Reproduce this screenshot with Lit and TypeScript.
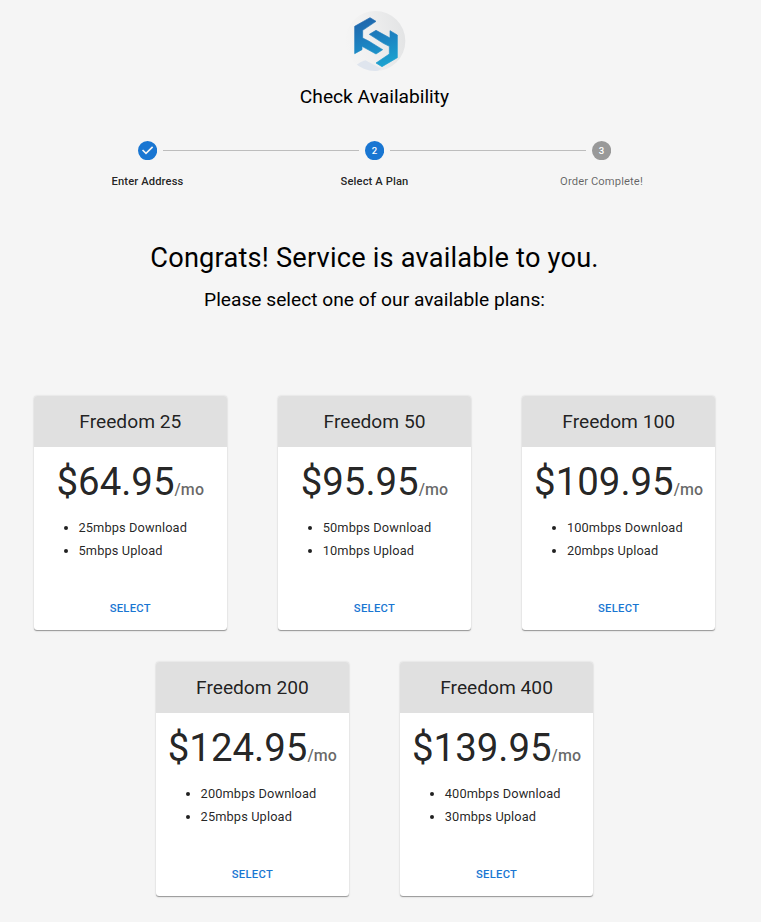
import { LitElement, html, css, svg, nothing } from "lit";
import { customElement, property } from "lit/decorators.js";

interface Plan {
  name: string;
  price: string;
  down: string;
  up: string;
}

const PLANS: Plan[] = [
  { name: "Freedom 25", price: "$64.95", down: "25mbps", up: "5mbps" },
  { name: "Freedom 50", price: "$95.95", down: "50mbps", up: "10mbps" },
  { name: "Freedom 100", price: "$109.95", down: "100mbps", up: "20mbps" },
  { name: "Freedom 200", price: "$124.95", down: "200mbps", up: "25mbps" },
  { name: "Freedom 400", price: "$139.95", down: "400mbps", up: "30mbps" },
];

@customElement("brand-logo")
export class BrandLogo extends LitElement {
  static styles = css`
    :host { display: block; width: 70px; height: 70px; }
    svg { display: block; }
  `;
  render() {
    return html`<svg width="70" height="70" viewBox="0 0 210 210">
      <defs>
        <linearGradient id="disc" x1="0" y1="0.6" x2="1" y2="0.4">
          <stop offset="0" stop-color="#f5f5f5" />
          <stop offset="0.35" stop-color="#f1f1f1" />
          <stop offset="1" stop-color="#e3e4e5" />
        </linearGradient>
        <linearGradient id="mark" gradientUnits="userSpaceOnUse" x1="80" y1="40" x2="125" y2="185">
          <stop offset="0" stop-color="#1f66ac" />
          <stop offset="0.5" stop-color="#1c84c2" />
          <stop offset="1" stop-color="#1ca3d0" />
        </linearGradient>
        <clipPath id="round"><circle cx="106" cy="108" r="90" /></clipPath>
      </defs>
      <circle cx="106" cy="108" r="90" fill="url(#disc)" />
      <path d="M44 183 Q60 170 76 166 L124 191 L106 202 L60 202Z" fill="#dfe5ee" clip-path="url(#round)" />
      <path d="M44 64 L90 38 L108 49 L68 76 L68 99 L86 108 L128 134 L108 147 L66 124 L66 134 L44 146Z" fill="url(#mark)" stroke="url(#mark)" stroke-width="2" />
      <path d="M172 158 L126 185 L108 174 L148 147 L148 124 L130 115 L88 88 L108 76 L150 99 L150 77 L172 90Z" fill="url(#mark)" stroke="url(#mark)" stroke-width="2" />
    </svg>`;
  }
}

@customElement("order-stepper")
export class OrderStepper extends LitElement {
  @property({ type: Number }) active = 1;

  static styles = css`
    :host { display: flex; width: 681px; }
    .step { flex: 1; display: flex; flex-direction: column; align-items: center; }
    .rail { width: 100%; display: grid; grid-template-columns: 1fr 19.2px 1fr; align-items: center; column-gap: 6.4px; }
    .line { height: 1px; background: #bdbdbd; }
    .icon { grid-column: 2; display: block; width: 19.2px; height: 19.2px; color: #999; }
    .icon.on { color: #1976d2; }
    .digit { font: 500 12px Roboto, sans-serif; fill: #fff; }
    .label { margin-top: 14.2px; font-size: 11.2px; line-height: 16px; letter-spacing: 0.115px; color: rgba(0, 0, 0, 0.6); }
    .label.on { font-weight: 500; letter-spacing: 0.105px; color: rgba(0, 0, 0, 0.87); }
  `;

  render() {
    const steps = ["Enter Address", "Select A Plan", "Order Complete!"];
    return steps.map((label, i) => {
      const on = i <= this.active ? "on" : "";
      return html`<div class="step">
        <div class="rail">
          ${i > 0 ? html`<span class="line"></span>` : nothing}
          <svg class="icon ${on}" viewBox="0 0 24 24">
            ${i < this.active
              ? svg`<path fill="currentColor" d="M12 0a12 12 0 1 0 0 24 12 12 0 0 0 0-24zm-2 17l-5-5 1.4-1.4 3.6 3.6 7.6-7.6L19 8l-9 9z" />`
              : svg`<circle cx="12" cy="12" r="12" fill="currentColor" /><text class="digit" x="12" y="16" text-anchor="middle">${i + 1}</text>`}
          </svg>
          ${i < steps.length - 1 ? html`<span class="line"></span>` : nothing}
        </div>
        <div class="label ${on}">${label}</div>
      </div>`;
    });
  }
}

@customElement("plan-card")
export class PlanCard extends LitElement {
  @property({ attribute: false }) plan!: Plan;

  static styles = css`
    :host {
      display: flex; flex-direction: column; box-sizing: border-box; width: 193.4px; height: 234.2px;
      overflow: hidden; border-radius: 3.2px; background: #fff; color: rgba(0, 0, 0, 0.87);
      box-shadow: 0 1.6px 0.8px -0.8px rgba(0, 0, 0, 0.2), 0 0.8px 0.8px rgba(0, 0, 0, 0.14), 0 0.8px 2.4px rgba(0, 0, 0, 0.12);
    }
    .head { padding: 12.8px; background: #e0e0e0; text-align: center; font-size: 19.2px; line-height: 25.6px; }
    .body { padding: 12.8px 12.8px 0; }
    .price { display: flex; justify-content: center; align-items: baseline; font-size: 38.4px; line-height: 44.8px; white-space: nowrap; }
    .per { font-size: 16px; line-height: 25.6px; font-weight: 500; letter-spacing: 0.12px; color: rgba(0, 0, 0, 0.6); }
    .list { margin: 11.2px 0 0; padding-left: 32.1px; font-size: 12.8px; line-height: 23.04px; letter-spacing: 0.12px; }
    .select {
      margin: auto 6.4px 6.8px; padding: 4.8px 6.4px; border: 0; background: none; color: #1976d2;
      font: 500 11.2px/19.6px Roboto, sans-serif; letter-spacing: 0.32px; text-transform: uppercase;
    }
  `;

  render() {
    const p = this.plan;
    return html`
      <div class="head">${p.name}</div>
      <div class="body">
        <div class="price">${p.price}<span class="per">/mo</span></div>
        <ul class="list">
          <li>${p.down} Download</li>
          <li>${p.up} Upload</li>
        </ul>
      </div>
      <button class="select">Select</button>
    `;
  }
}

@customElement("app-root")
export class AppRoot extends LitElement {
  static styles = css`
    :host { display: block; box-sizing: border-box; min-height: 922px; padding-right: 12px; background: #f5f5f5; font-family: Roboto, sans-serif; color: #000; }
    .page { display: flex; flex-direction: column; align-items: center; padding-top: 5px; }
    h1, h2, h3 { margin: 0; font-weight: 400; }
    .title { margin-top: 9px; font-size: 19.2px; line-height: 25.6px; }
    .stepper { margin-top: 31px; }
    .congrats { margin-top: 51.6px; font-size: 27.2px; line-height: 33.6px; letter-spacing: 0.2px; }
    .hint { margin-top: 12px; font-size: 19.2px; line-height: 25.6px; }
    .plans { display: flex; flex-wrap: wrap; justify-content: center; gap: 31.8px 50.8px; width: 749px; margin-top: 83.4px; }
  `;

  render() {
    return html`<main class="page">
      <brand-logo></brand-logo>
      <h1 class="title">Check Availability</h1>
      <order-stepper class="stepper" .active=${1}></order-stepper>
      <h2 class="congrats">Congrats! Service is available to you.</h2>
      <h3 class="hint">Please select one of our available plans:</h3>
      <section class="plans">${PLANS.map((p) => html`<plan-card .plan=${p}></plan-card>`)}</section>
    </main>`;
  }
}
